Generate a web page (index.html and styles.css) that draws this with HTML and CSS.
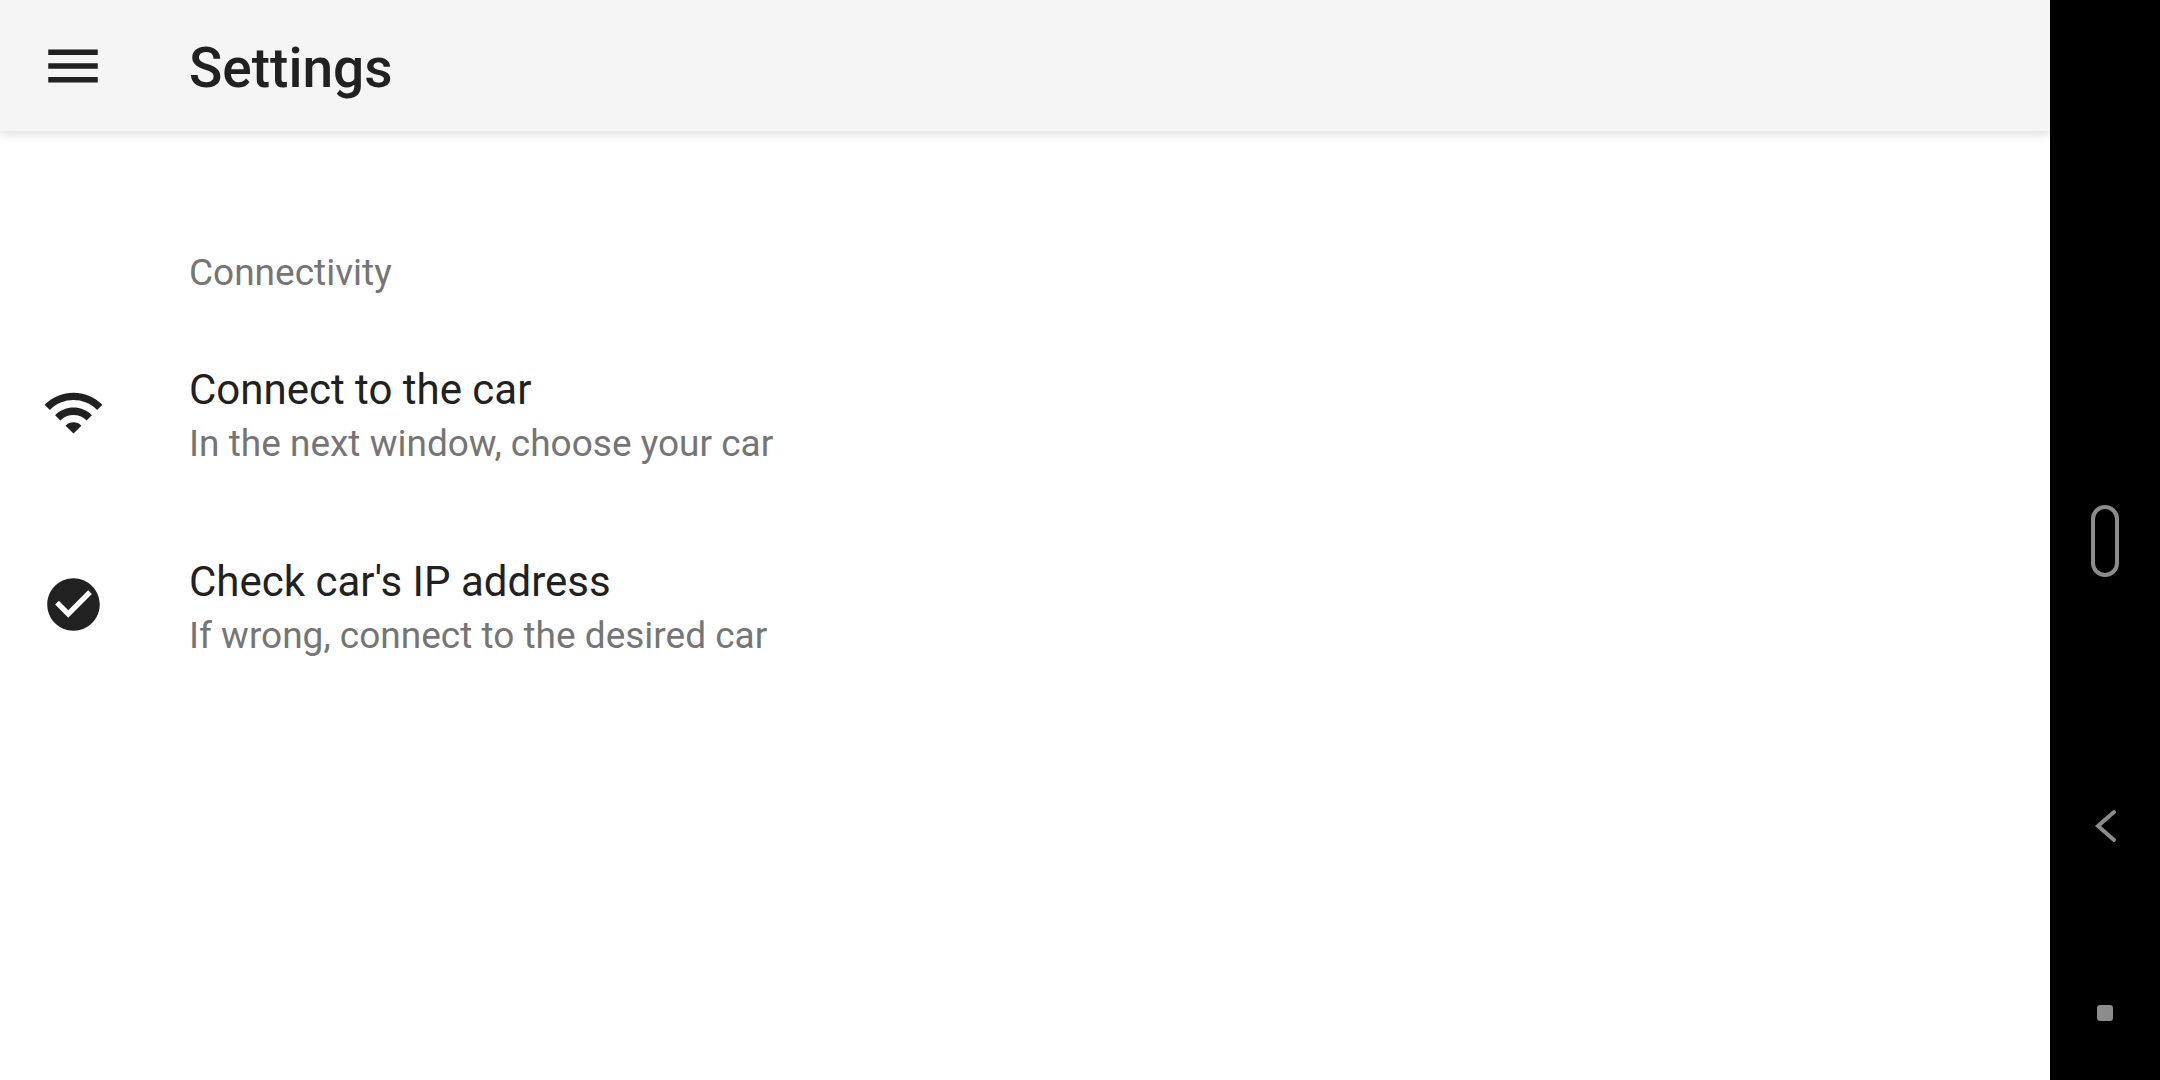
FILE: index.html
```html
<!DOCTYPE html>
<html lang="en">
<head>
<meta charset="utf-8">
<title>Settings</title>
<link rel="stylesheet" href="styles.css">
</head>
<body>
<div class="app">
  <header class="toolbar">
    <button class="menu-button" type="button" aria-label="Open menu">
      <svg class="menu-icon" viewBox="0 0 24 24"><path d="M3 18h18v-2H3v2zm0-5h18v-2H3v2zm0-7v2h18V6H3z"/></svg>
    </button>
    <h1 class="title">Settings</h1>
  </header>
  <main class="settings">
    <h2 class="category">Connectivity</h2>
    <button class="preference" type="button">
      <svg class="icon" viewBox="0 0 24 24"><path d="M1 9l2 2c4.970-4.970 13.030-4.970 18 0l2-2C16.930 2.930 7.080 2.930 1 9zm8 8l3 3 3-3c-1.650-1.660-4.340-1.660-6 0zm-4-4l2 2c2.760-2.760 7.240-2.760 10 0l2-2C15.140 9.140 8.870 9.140 5 13z"/></svg>
      <span class="text"><span class="name">Connect to the car</span><span class="summary">In the next window, choose your car</span></span>
    </button>
    <button class="preference" type="button">
      <svg class="icon" viewBox="0 0 24 24"><path d="M12 2C6.480 2 2 6.480 2 12s4.480 10 10 10 10-4.480 10-10S17.520 2 12 2zm-2 15l-5-5 1.410-1.410L10 14.170l7.590-7.590L19 8l-9 9z"/></svg>
      <span class="text"><span class="name">Check car's IP address</span><span class="summary">If wrong, connect to the desired car</span></span>
    </button>
  </main>
</div>
<nav class="navbar" aria-label="System navigation">
  <button class="nav-button home" type="button" aria-label="Home">
    <svg width="30" height="74" viewBox="0 0 30 74"><rect x="3" y="3" width="24" height="68" rx="12"/></svg>
  </button>
  <button class="nav-button back" type="button" aria-label="Back">
    <svg width="24" height="36" viewBox="0 0 24 36"><path d="M21 4L5 18l16 14"/></svg>
  </button>
  <button class="nav-button recents" type="button" aria-label="Recent apps">
    <svg width="16" height="16" viewBox="0 0 16 16"><rect width="16" height="16" rx="3"/></svg>
  </button>
</nav>
</body>
</html>
```

FILE: styles.css
```css
* { box-sizing: border-box; }

body {
  margin: 0;
  min-height: 100vh;
  display: flex;
  font-family: Roboto, "Liberation Sans", sans-serif;
  color: #212121;
  background: #fff;
}

button {
  margin: 0;
  padding: 0;
  border: 0;
  background: none;
  color: inherit;
  font: inherit;
  text-align: left;
}

h1, h2 { margin: 0; }

svg {
  display: block;
  flex: none;
  fill: #212121;
}

.app { flex: 1; }

.toolbar {
  display: flex;
  align-items: center;
  gap: 83px;
  height: 131px;
  padding: 0 40px;
  background: #f5f5f5;
  box-shadow: 0 2px 10px rgba(0, 0, 0, 0.16);
}

.menu-icon {
  width: 66px;
  height: 66px;
}

.icon {
  width: 63px;
  height: 63px;
}

.title {
  padding-top: 4px;
  font-size: 55px;
  font-weight: 500;
  line-height: 64px;
}

.settings { padding-top: 108px; }

.category {
  padding: 12px 189px 21px;
  font-size: 37px;
  font-weight: 400;
  line-height: 44px;
  color: #757575;
}

.preference {
  display: flex;
  align-items: center;
  gap: 84px;
  width: 100%;
  height: 192px;
  padding: 0 42px;
}

.text {
  display: grid;
  padding-top: 10px;
}

.name {
  font-size: 42px;
  line-height: 54px;
}

.summary {
  font-size: 37px;
  line-height: 54px;
  color: #757575;
}

.navbar {
  flex: none;
  display: grid;
  grid-template-rows: 376fr 330fr 240fr 134fr;
  width: 110px;
  background: #000;
}

.nav-button {
  display: flex;
  align-items: center;
  justify-content: center;
}

.home { grid-row: 2; }

.back { grid-row: 3; }

.recents { grid-row: 4; }

.nav-button svg {
  fill: none;
  stroke: #8c8c8c;
  stroke-width: 4;
  stroke-linecap: round;
}

.nav-button.recents svg {
  fill: #8c8c8c;
  stroke: none;
}
```
